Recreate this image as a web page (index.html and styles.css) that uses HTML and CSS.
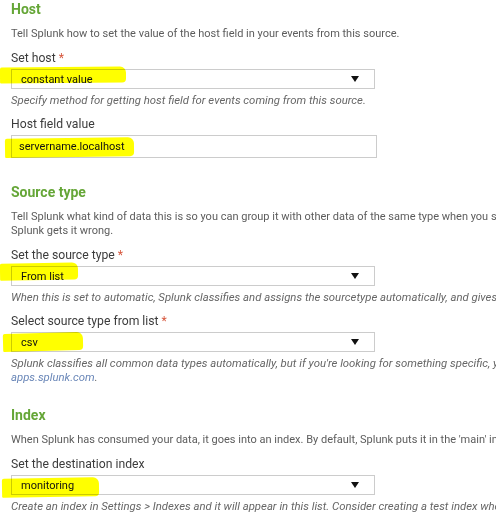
FILE: index.html
```html
<!DOCTYPE html>
<html lang="en">
<head>
    <meta charset="UTF-8">
    <title>Input Settings</title>
    <link rel="stylesheet" href="styles.css">
</head>
<body>
    <div class="settings">
        <div class="section">
            <h2 class="title">Host</h2>
            <p class="desc">Tell Splunk how to set the value of the host field in your events from this source.</p>
            <label class="label">Set host <span class="req">*</span></label>
            <div class="control select">
                <span class="mark mark-host"></span>
                <span class="value">constant value</span>
                <span class="caret"></span>
            </div>
            <p class="help">Specify method for getting host field for events coming from this source.</p>
            <label class="label">Host field value</label>
            <div class="control textbox">
                <span class="mark mark-server"></span>
                <span class="value">servername.localhost</span>
            </div>
        </div>

        <div class="section">
            <h2 class="title">Source type</h2>
            <p class="desc">Tell Splunk what kind of data this is so you can group it with other data of the same type when you search. Splunk does this automatically, but you can specify what data is if<br>Splunk gets it wrong.</p>
            <label class="label">Set the source type <span class="req">*</span></label>
            <div class="control select">
                <span class="mark mark-list"></span>
                <span class="value">From list</span>
                <span class="caret"></span>
            </div>
            <p class="help">When this is set to automatic, Splunk classifies and assigns the sourcetype automatically, and gives it a generic name.</p>
            <label class="label">Select source type from list <span class="req">*</span></label>
            <div class="control select">
                <span class="mark mark-csv"></span>
                <span class="value">csv</span>
                <span class="caret"></span>
            </div>
            <p class="help">Splunk classifies all common data types automatically, but if you're looking for something specific, you can find more source types in the Splunk Apps site on<br><a class="link" href="#">apps.splunk.com</a>.</p>
        </div>

        <div class="section">
            <h2 class="title">Index</h2>
            <p class="desc">When Splunk has consumed your data, it goes into an index. By default, Splunk puts it in the 'main' index. You can specify a different index.</p>
            <label class="label">Set the destination index</label>
            <div class="control select">
                <span class="mark mark-index"></span>
                <span class="value">monitoring</span>
                <span class="caret"></span>
            </div>
            <p class="help">Create an index in Settings &gt; Indexes and it will appear in this list. Consider creating a test index when you are trying new data.</p>
        </div>
    </div>
</body>
</html>
```

FILE: styles.css
```css
html, body {
    overflow: hidden;
}
body {
    margin: 0;
    background: #ffffff;
    font-family: Roboto, "Liberation Sans", sans-serif;
    color: #333333;
}
.settings {
    width: 1000px;
    padding-left: 11px;
}
.section {
    display: flex;
    flex-direction: column;
    align-items: flex-start;
    margin-bottom: 22px;
}
.title {
    margin: 0;
    font-size: 14px;
    line-height: 18px;
    font-weight: 700;
    color: #65a637;
}
.desc {
    margin: 9px 0 0;
    font-size: 11px;
    line-height: 14px;
    color: #5c5c5c;
    white-space: nowrap;
}
.label {
    margin-top: 9px;
    font-size: 12.2px;
    line-height: 16px;
    color: #3c3c3c;
}
.req {
    color: #d6563c;
}
.help {
    margin: 4px 0 0;
    font-size: 11.35px;
    line-height: 14px;
    font-style: italic;
    color: #666666;
    white-space: nowrap;
}
.link {
    color: #6a87b8;
    text-decoration: none;
}

/* fake form controls */
.control {
    position: relative;
    display: flex;
    align-items: center;
    box-sizing: border-box;
    margin-top: 3px;
    background: #ffffff;
    border: 1px solid #cccccc;
    font-size: 11px;
    color: #111111;
}
.select {
    width: 364px;
    height: 20px;
    padding: 0 15px 0 9px;
}
.textbox {
    width: 366px;
    height: 23px;
    padding: 0 8px 0 7px;
    margin-bottom: 3px;
}
.value {
    position: relative;
    flex: 1;
}
.caret {
    width: 0;
    height: 0;
    border-left: 4px solid transparent;
    border-right: 4px solid transparent;
    border-top: 6px solid #111111;
}

/* yellow highlighter marks over the values */
.mark {
    position: absolute;
    background: #ffff00;
    border-radius: 2px 6px 4px 1px;
    mix-blend-mode: multiply;
}
.mark-host {
    left: -12px;
    top: -3px;
    width: 126px;
    height: 16px;
    transform: rotate(-0.4deg);
}
.mark-server {
    left: -7px;
    top: 2px;
    width: 129px;
    height: 19px;
    transform: rotate(-0.8deg);
}
.mark-list {
    left: -12px;
    top: -4px;
    width: 78px;
    height: 17px;
    transform: rotate(-1deg);
}
.mark-csv {
    left: -9px;
    top: 0;
    width: 80px;
    height: 18px;
    transform: rotate(-1.5deg);
}
.mark-index {
    left: -10px;
    top: 2px;
    width: 97px;
    height: 19px;
    transform: rotate(-1deg);
}
```
